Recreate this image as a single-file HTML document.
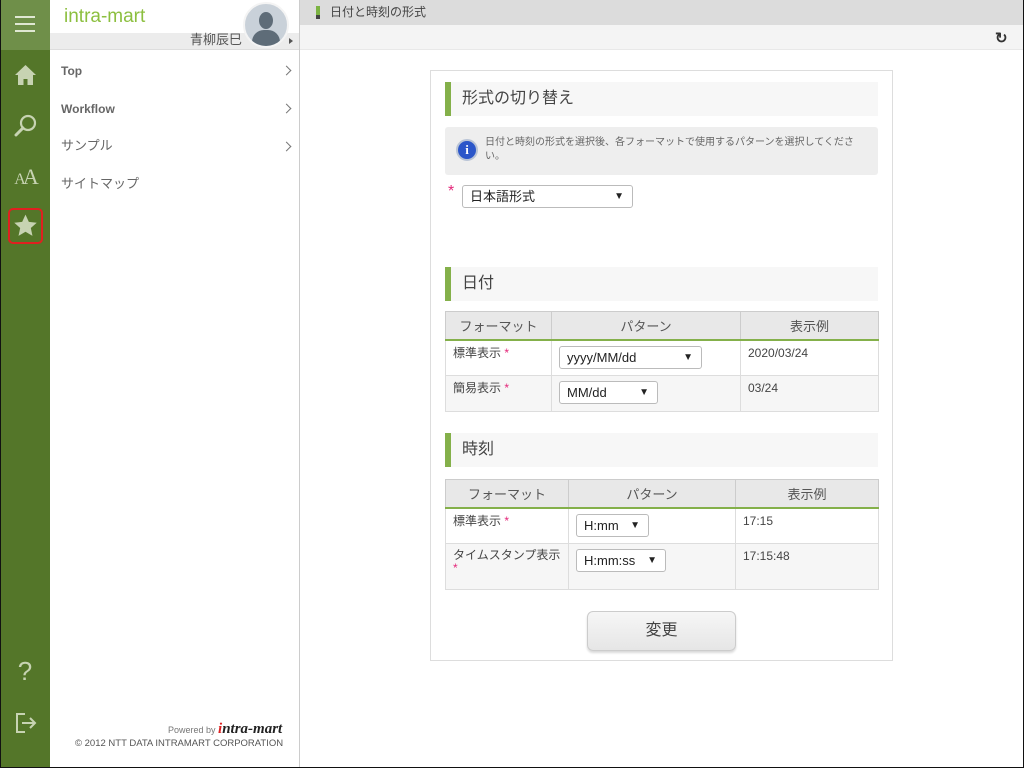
<!DOCTYPE html>
<html><head><meta charset="utf-8"><style>
*{box-sizing:border-box;margin:0;padding:0}
body{width:1024px;height:768px;position:relative;overflow:hidden;background:#fff;font-family:"Liberation Sans","Noto Sans CJK JP",sans-serif;color:#333}
.a{position:absolute}
.rail{left:0;top:0;width:50px;height:768px;background:#547629;border-left:1px solid #111}
.ic{position:absolute;left:0;width:50px;text-align:center;color:#c7d3b2}
.menu{left:61px;font-size:12px;color:#666;line-height:14px}
.chev{left:283px;width:7px;height:7px;border-right:1.5px solid #777;border-top:1.5px solid #777;transform:rotate(45deg)}
.sec{left:445px;width:433px;height:34px;background:#f7f7f7;border-left:6px solid #84b04a;font-size:16px;color:#444;padding:0 0 0 11px;line-height:34px}
table{position:absolute;left:445px;width:434px;border-collapse:collapse;font-size:12px;color:#444}
th{background:#e8e8e8;font-weight:normal;height:28px;border:1px solid #ccc;border-bottom:2px solid #84b04a;font-size:13px;color:#555}
td{border:1px solid #ddd;vertical-align:top;padding:5px 7px;line-height:15px}
tr.g td{background:#f6f6f6}
.sel{display:inline-block;border:1px solid #bbb;border-radius:3px;background:#fff;height:23px;font-size:13px;color:#222;padding:0 7px;line-height:21px;position:relative;vertical-align:top}
.sel:after{content:"▼";position:absolute;right:8px;top:0;font-size:10px}
.st{color:#e4277a}
</style></head><body>
<div class="a rail"></div>
<div class="a" style="left:1px;top:0;width:49px;height:50px;background:#6f8f49"></div>
<div class="a" style="left:15px;top:16px;width:20px;height:2px;background:#dfe7d2;box-shadow:0 7px 0 #dfe7d2,0 14px 0 #dfe7d2"></div>
<svg class="a" style="left:14px;top:64px" width="23" height="22" viewBox="0 0 23 22"><path d="M11.5 1L1 11h3v10h5.5v-6h4v6H19V11h3z" fill="#c7d3b2"/></svg>
<svg class="a" style="left:14px;top:114px" width="24" height="24" viewBox="0 0 24 24"><circle cx="14" cy="9" r="7" fill="none" stroke="#c7d3b2" stroke-width="2.2"/><path d="M9 14L2 21" stroke="#c7d3b2" stroke-width="3" stroke-linecap="round"/></svg>
<div class="ic" style="top:164px;font-family:'Liberation Serif',serif;font-size:22px;letter-spacing:-3px"><span style="font-size:16px">A</span>A</div>
<div class="a" style="left:8px;top:208px;width:35px;height:36px;border:2px solid #e02020;border-radius:5px"></div>
<svg class="a" style="left:13px;top:213px" width="25" height="25" viewBox="0 0 24 24"><path d="M12 1.5l3.2 7 7.6.8-5.7 5.1 1.6 7.5L12 18l-6.7 3.9 1.6-7.5L1.2 9.3l7.6-.8z" fill="#c7d3b2"/></svg>
<div class="ic" style="top:656px;font-size:26px">?</div>
<svg class="a" style="left:14px;top:711px" width="24" height="24" viewBox="0 0 24 24"><path d="M11 3H3v18h8" fill="none" stroke="#c7d3b2" stroke-width="2"/><path d="M8 12h13M16 7l5 5-5 5" fill="none" stroke="#c7d3b2" stroke-width="2"/></svg>

<div class="a" style="left:50px;top:33px;width:249px;height:17px;background:#ececec;border-bottom:1px solid #ddd"></div>
<div class="a" style="left:64px;top:6px;font-size:19px;color:#8cbf3f">intra-mart</div>
<div class="a" style="left:190px;top:32px;font-size:13px;color:#555;line-height:16px">青柳辰巳</div>
<div class="a" style="left:243px;top:2px;width:46px;height:46px;border-radius:50%;background:#c9d1d9;border:2px solid #f4f4f4;overflow:hidden"><div style="position:absolute;left:14px;top:8px;width:14px;height:17px;border-radius:50%;background:#5e6c78"></div><div style="position:absolute;left:7px;top:26px;width:28px;height:20px;border-radius:12px 12px 0 0;background:#5e6c78"></div></div>
<div class="a" style="left:289px;top:38px;border-left:4px solid #555;border-top:3px solid transparent;border-bottom:3px solid transparent"></div>
<div class="a menu" style="top:64px;font-weight:bold">Top</div><div class="a chev" style="top:67px"></div>
<div class="a menu" style="top:102px;font-weight:bold">Workflow</div><div class="a chev" style="top:105px"></div>
<div class="a menu" style="top:138px;font-size:13px;line-height:16px">サンプル</div><div class="a chev" style="top:143px"></div>
<div class="a menu" style="top:176px;font-size:13px;line-height:16px">サイトマップ</div>
<div class="a" style="left:299px;top:0;width:1px;height:768px;background:#ccc"></div>
<div class="a" style="left:168px;top:721px;font-size:9px;color:#777">Powered by <i style="font-family:'Liberation Serif',serif;font-size:15px;font-weight:bold;color:#222"><span style="color:#d22">i</span>ntra-mart</i></div>
<div class="a" style="left:75px;top:738px;font-size:9.5px;color:#555">© 2012 NTT DATA INTRAMART CORPORATION</div>

<div class="a" style="left:300px;top:0;width:724px;height:25px;background:#dcdcdc"></div>
<div class="a" style="left:316px;top:6px;width:4px;height:13px;background:#7cb342;border-bottom:4px solid #444"></div>
<div class="a" style="left:330px;top:4px;font-size:12px;color:#444;line-height:16px">日付と時刻の形式</div>
<div class="a" style="left:300px;top:25px;width:724px;height:25px;background:#f4f4f4;border-bottom:1px solid #e8e8e8"></div>
<div class="a" style="left:995px;top:29px;font-size:15px;font-weight:bold;color:#333">&#x21bb;</div>
<div class="a" style="left:1023px;top:0;width:1px;height:768px;background:#111"></div>
<div class="a" style="left:0;top:767px;width:1024px;height:1px;background:#111"></div>

<div class="a" style="left:430px;top:70px;width:463px;height:591px;border:1px solid #ddd"></div>
<div class="a sec" style="top:82px">形式の切り替え</div>
<div class="a" style="left:445px;top:127px;width:433px;height:48px;background:#eee;border-radius:3px"></div>
<div class="a" style="left:456px;top:139px;width:22px;height:22px;border-radius:50%;background:#2b56c9;border:2px solid #b9c4d6;color:#fff;font:bold 13px 'Liberation Serif',serif;text-align:center;line-height:18px">i</div>
<div class="a" style="left:485px;top:136px;width:385px;font-size:10px;color:#666;line-height:14px">日付と時刻の形式を選択後、各フォーマットで使用するパターンを選択してください。</div>
<div class="a st" style="left:448px;top:183px;font-size:16px">*</div>
<div class="a sel" style="left:462px;top:185px;width:171px">日本語形式</div>

<div class="a sec" style="top:267px">日付</div>
<table style="top:311px"><tr><th style="width:106px">フォーマット</th><th style="width:189px">パターン</th><th>表示例</th></tr>
<tr style="height:36px"><td>標準表示 <span class="st">*</span></td><td><span class="sel" style="width:143px">yyyy/MM/dd</span></td><td>2020/03/24</td></tr>
<tr class="g" style="height:36px"><td>簡易表示 <span class="st">*</span></td><td><span class="sel" style="width:99px">MM/dd</span></td><td>03/24</td></tr></table>

<div class="a sec" style="top:433px">時刻</div>
<table style="top:479px"><tr><th style="width:123px">フォーマット</th><th style="width:167px">パターン</th><th>表示例</th></tr>
<tr style="height:36px"><td>標準表示 <span class="st">*</span></td><td><span class="sel" style="width:73px">H:mm</span></td><td>17:15</td></tr>
<tr class="g" style="height:46px"><td style="line-height:13px">タイムスタンプ表示<br><span class="st">*</span></td><td><span class="sel" style="width:90px">H:mm:ss</span></td><td>17:15:48</td></tr></table>

<div class="a" style="left:587px;top:611px;width:149px;height:40px;border:1px solid #ccc;border-radius:6px;background:linear-gradient(#f6f6f6,#e6e6e6);box-shadow:0 2px 2px rgba(0,0,0,.15);text-align:center;font-size:16px;color:#444;line-height:38px">変更</div>
</body></html>
